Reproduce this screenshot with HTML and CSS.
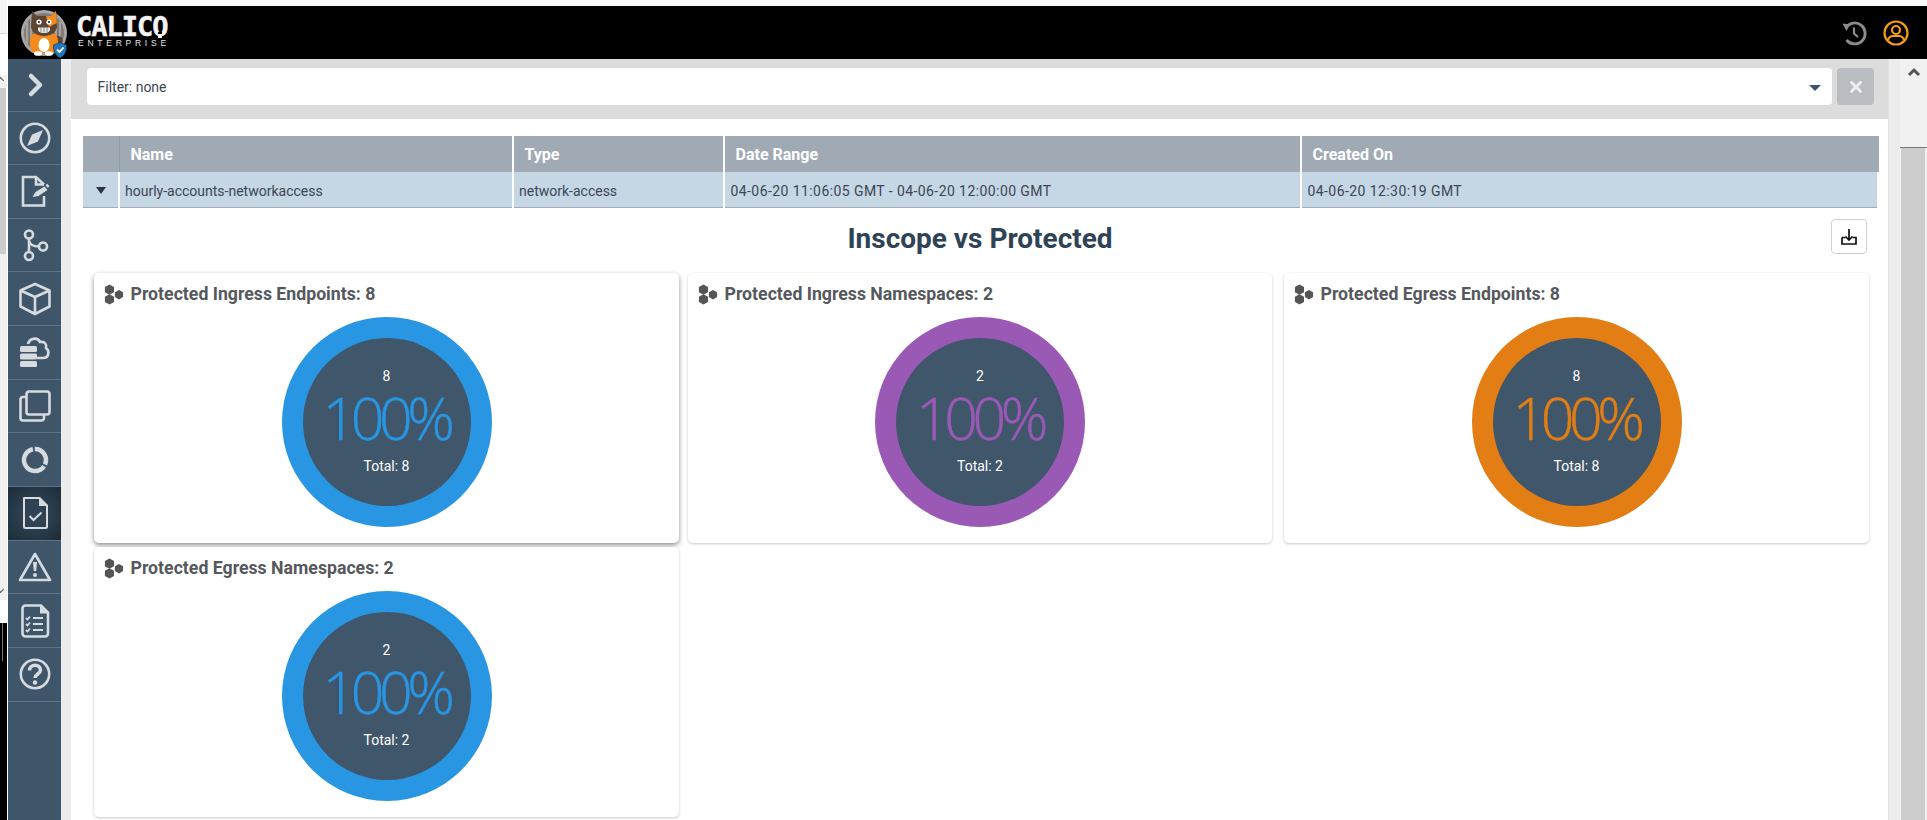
FILE: index.html
```html
<!DOCTYPE html>
<html lang="en">
<head>
<meta charset="utf-8">
<title>Calico Enterprise</title>
<link rel="stylesheet" href="styles.css">
</head>
<body>
<svg class="defs" width="0" height="0">
  <symbol id="hexes" viewBox="0 0 22 22">
    <path d="M6 0l5 2.8v5.6l-5 2.8-5-2.8V2.800z"/>
    <path d="M6 10.800l5 2.800v5.600l-5 2.800-5-2.800v-5.600z"/>
    <path d="M16.500 6l4.500 2.600v5.200l-4.500 2.600-4.500-2.600V8.600z"/>
  </symbol>
</svg>
<div class="backdrop">
  <div class="bd-tab"></div>
  <div class="bd-white"></div>
  <div class="bd-track"><span class="bd-up"></span></div>
  <div class="bd-thumb"></div>
  <div class="bd-rest"><span class="bd-down"></span></div>
  <div class="bd-white2"></div>
  <div class="bd-black"><span class="bd-line"></span></div>
</div>
<div class="app">
  <div class="top-strip"></div>
  <header class="topbar">
    <svg class="logo-cat" width="52" height="52" viewBox="0 0 52 52">
      <circle cx="24" cy="26" r="23" fill="#a8a5a2"/>
      <circle cx="24" cy="26" r="20" fill="#7d7a78"/>
      <path d="M7 15v22M11 11v30M36 10v32M40 15v22" stroke="#a5a29f" stroke-width="2" fill="none"/>
      <path d="M35 29c7-1 9 3 7 8-1 3-4 5-8 5l-1-3c3 0 5-2 5-4 0-2-1-3-3-3z" fill="#5e4433"/>
      <path d="M12 27c-3 6-3 15 2 19h20c5-4 5-13 2-19z" fill="#f28a1e"/>
      <ellipse cx="24" cy="38" rx="5.500" ry="7" fill="#fff"/>
      <path d="M12 4l5 5h14l5-5 1 15c0 6-6 10-13 10s-13-4-13-10z" fill="#5e4433"/>
      <path d="M26 9h5l5-5 .8 12-7.800 4z" fill="#f28a1e"/>
      <circle cx="19" cy="15" r="2.600" fill="#fff"/>
      <circle cx="29" cy="15" r="2.600" fill="#fff"/>
      <circle cx="19" cy="15" r="1.100" fill="#222"/>
      <circle cx="29" cy="15" r="1.100" fill="#222"/>
      <path d="M18 20.500h12v2c0 2-2.500 3.500-6 3.500s-6-1.500-6-3.500z" fill="#eee"/>
      <path d="M21 20.500v4.500M24 20.500v5M27 20.500v4.500" stroke="#777" stroke-width=".9"/>
      <ellipse cx="18" cy="46.500" rx="4" ry="2.300" fill="#fff"/>
      <ellipse cx="29" cy="46.500" rx="4" ry="2.300" fill="#fff"/>
      <path d="M40 35.500l6.500 2.500c.5 6-2 11-6.500 13-4.500-2-7-7-6.500-13z" fill="#1f78bd" stroke="#222" stroke-width=".6"/>
      <path d="M37 42.500l2.500 2.500 4-4.500" stroke="#fff" stroke-width="1.800" fill="none"/>
    </svg>
    <div class="brand">
      <span class="brand-name">CALICO</span>
      <span class="brand-sub">ENTERPRISE</span>
    </div>
    <div class="top-actions">
      <svg class="ic-history" width="26" height="26" viewBox="0 0 26 26" fill="none" stroke="#8c8c8c" stroke-width="2.800">
        <path d="M5 7.500A10.500 10.500 0 1 1 5.500 20"/>
        <path d="M1.500 3.500l7.500 1-3.500 6.500z" fill="#8c8c8c" stroke="none"/>
        <path d="M13 7.500v6l4 3.500" stroke-width="2.200"/>
      </svg>
      <svg class="ic-user" width="26" height="26" viewBox="0 0 26 26" fill="none" stroke="#f39c12" stroke-width="2.200">
        <circle cx="13" cy="13" r="11.500"/>
        <circle cx="13" cy="10" r="4"/>
        <path d="M5 20c1-3.500 3-4 5-4h6c2 0 4 .5 5 4"/>
      </svg>
    </div>
  </header>
  <div class="below">
    <nav class="sidebar">
      <div class="nav-item nav-first">
        <svg class="nav-ic" viewBox="0 0 34 34"><path d="M13 8l9 9-9 9" stroke-width="4.500" stroke-linecap="round" stroke-linejoin="round"/></svg>
      </div>
      <div class="nav-item">
        <svg class="nav-ic" viewBox="0 0 34 34"><circle cx="17" cy="17" r="14.200"/><path class="solid" d="M25 9L20 20.500 9 25l5-11.500z"/></svg>
      </div>
      <div class="nav-item">
        <svg class="nav-ic" viewBox="0 0 34 34"><path d="M26 22v9.500H5V3h13l8 7.500"/><path d="M18 3v7.500h8" /><path class="solid" d="M14.500 23l3-5 9-5.500 3 3.500-9 6z"/><path class="solid" d="M27.500 11l2-1.200 2 2.700-2 1.200z"/></svg>
      </div>
      <div class="nav-item">
        <svg class="nav-ic" viewBox="0 0 34 34"><circle cx="11" cy="6.500" r="4"/><circle cx="11" cy="28" r="4"/><circle cx="25" cy="18.500" r="4"/><path d="M11 10.500v13.500M11 13c1 4 5 5.500 10 5.500"/></svg>
      </div>
      <div class="nav-item">
        <svg class="nav-ic" viewBox="0 0 34 34"><path d="M17 2l14.500 6.500v16L17 32 2.500 24.500v-16zM2.500 8.500L17 15l14.500-6.500M17 15v17" stroke-linejoin="round"/></svg>
      </div>
      <div class="nav-item">
        <svg class="nav-ic" viewBox="0 0 34 34"><path d="M10 9c1-5 9-8 12-2 5-1 7 3 6 6 4 3 3 10-3 10h-6"/><rect class="solid" x="2" y="11" width="17" height="6" rx="1.500"/><rect class="solid" x="2" y="18.500" width="17" height="6" rx="1.500"/><rect class="solid" x="2" y="26" width="17" height="6" rx="1.500"/></svg>
      </div>
      <div class="nav-item">
        <svg class="nav-ic" viewBox="0 0 34 34"><rect x="8.500" y="2.500" width="23" height="23" rx="2.500"/><path d="M8.500 8H5a2.500 2.500 0 0 0-2.500 2.500V29A2.500 2.500 0 0 0 5 31.500h18.500a2.500 2.500 0 0 0 2.500-2.500v-3.500"/></svg>
      </div>
      <div class="nav-item">
        <svg class="nav-ic" viewBox="0 0 34 34"><path class="thick" d="M14.900 6.200A11 11 0 1 0 26.100 23.200"/><path class="thick" d="M16.800 6A11 11 0 0 1 27 21.500"/></svg>
      </div>
      <div class="nav-item nav-active">
        <svg class="nav-ic" viewBox="0 0 34 34"><path d="M6 2h15.500L29 9.500v21a1.500 1.500 0 0 1-1.500 1.500h-20A1.500 1.500 0 0 1 6 30.500z" stroke-width="2" stroke-linejoin="round"/><path class="solid" d="M21 2l8 8h-8z"/><path d="M11.500 20l4 4 8-7.500" stroke-width="2"/></svg>
      </div>
      <div class="nav-item">
        <svg class="nav-ic" viewBox="0 0 34 34"><path d="M17 4L32 30H2z" stroke-linejoin="round"/><path class="solid" d="M15 12h4l-.8 9h-2.400z"/><circle class="solid" cx="17" cy="25" r="2"/></svg>
      </div>
      <div class="nav-item">
        <svg class="nav-ic" viewBox="0 0 34 34"><path d="M7.500 1.500H23l7 7v21a3 3 0 0 1-3 3H7.500a3 3 0 0 1-3-3v-25a3 3 0 0 1 3-3z"/><path class="solid" d="M22 1.500l8 8h-8z"/><path d="M15 14h10M15 20h10M15 26h10M8 14l1.500 1.500L12 12.500M8 20l1.500 1.500L12 18.500M8 26l1.500 1.500L12 24.500" stroke-width="1.800"/></svg>
      </div>
      <div class="nav-item">
        <svg class="nav-ic" viewBox="0 0 34 34"><circle cx="17" cy="17" r="14.200"/><path d="M11.500 13.500c0-7 11-7 11-.5 0 4-5.500 4-5.500 8" stroke-width="3.500"/><circle class="solid" cx="17" cy="25.500" r="2.200"/></svg>
      </div>
    </nav>
    <div class="gutter"></div>
    <main class="main">
      <div class="filter-panel">
        <div class="filter-box">
          <span class="filter-text">Filter: none</span>
          <span class="filter-caret"></span>
        </div>
        <div class="filter-clear">
          <svg width="12" height="12" viewBox="0 0 12 12"><path d="M1.500 1.500l9 9M10.500 1.500l-9 9" stroke="#edeff1" stroke-width="2.800" stroke-linecap="round"/></svg>
        </div>
      </div>
      <div class="report-table">
        <div class="tr tr-head">
          <div class="th th-toggle"></div>
          <div class="th">Name</div>
          <div class="th">Type</div>
          <div class="th">Date Range</div>
          <div class="th th-last">Created On</div>
        </div>
        <div class="tr tr-row">
          <div class="td td-toggle"><span class="row-caret"></span></div>
          <div class="td">hourly-accounts-networkaccess</div>
          <div class="td">network-access</div>
          <div class="td td-date">04-06-20 11:06:05 GMT - 04-06-20 12:00:00 GMT</div>
          <div class="td td-date td-last">04-06-20 12:30:19 GMT</div>
        </div>
      </div>
      <div class="report-head">
        <h1 class="report-title">Inscope vs Protected</h1>
        <button class="download-btn" type="button" aria-label="Download">
          <svg width="20" height="20" viewBox="0 0 20 20" fill="none" stroke="#111" stroke-width="1.700"><path d="M3 10.500v6.500h14v-6.500h-3.500M6.500 10.500H3"/><path d="M10 2v11M6.500 9.500L10 13l3.500-3.500"/></svg>
        </button>
      </div>
      <div class="cards">
        <section class="card card-a card-hover">
          <h2 class="card-title"><svg class="hex-ic"><use href="#hexes"/></svg>Protected Ingress Endpoints: 8</h2>
          <div class="donut donut-blue"><div class="donut-inner"><span class="d-count">8</span><span class="d-pct">100%</span><span class="d-total">Total: 8</span></div></div>
        </section>
        <section class="card card-b">
          <h2 class="card-title"><svg class="hex-ic"><use href="#hexes"/></svg>Protected Ingress Namespaces: 2</h2>
          <div class="donut donut-purple"><div class="donut-inner"><span class="d-count">2</span><span class="d-pct">100%</span><span class="d-total">Total: 2</span></div></div>
        </section>
        <section class="card">
          <h2 class="card-title"><svg class="hex-ic"><use href="#hexes"/></svg>Protected Egress Endpoints: 8</h2>
          <div class="donut donut-orange"><div class="donut-inner"><span class="d-count">8</span><span class="d-pct">100%</span><span class="d-total">Total: 8</span></div></div>
        </section>
        <section class="card card-a">
          <h2 class="card-title"><svg class="hex-ic"><use href="#hexes"/></svg>Protected Egress Namespaces: 2</h2>
          <div class="donut donut-blue"><div class="donut-inner"><span class="d-count">2</span><span class="d-pct">100%</span><span class="d-total">Total: 2</span></div></div>
        </section>
      </div>
    </main>
    <div class="gutter gutter-right"></div>
    <div class="scrollbar">
      <div class="sb-top"><svg width="14" height="10" viewBox="0 0 14 10" fill="none"><path d="M2 8l5-5 5 5" stroke="#555" stroke-width="3"/></svg></div>
      <div class="sb-thumb"></div>
    </div>
  </div>
</div>
</body>
</html>
```
FILE: styles.css
```css
* { box-sizing: border-box; }
html, body { margin: 0; height: 820px; overflow: hidden; }
body { display: flex; background: #fff; font-family: Roboto, "Liberation Sans", sans-serif; color: #3f4a55; }
.defs { position: absolute; }

/* sliver of another window on the far left */
.backdrop { width: 8px; flex: none; height: 820px; display: flex; flex-direction: column; padding-right: 1px; }
.bd-tab { height: 34px; background: #f5f5f5; border-bottom: 1px solid #d8d8d8; }
.bd-white { height: 41px; background: #fff; }
.bd-track { height: 13px; background: #f1f1f1; position: relative; overflow: hidden; }
.bd-up { position: absolute; left: -2px; top: 3px; width: 5px; height: 5px; border-left: 1.500px solid #555; border-top: 1.500px solid #555; transform: rotate(45deg); }
.bd-thumb { height: 166px; background: #cdcdcd; margin-right: 1px; }
.bd-rest { height: 346px; background: #f0f0f0; position: relative; overflow: hidden; }
.bd-down { position: absolute; left: -2px; bottom: 8px; width: 5px; height: 5px; border-right: 1.500px solid #555; border-bottom: 1.500px solid #555; transform: rotate(45deg); }
.bd-white2 { height: 23px; background: #fff; }
.bd-black { flex: 1; background: #000; position: relative; }
.bd-line { position: absolute; left: 2px; top: 0; width: 1px; height: 38px; background: #777; }

.app { flex: 1; min-width: 0; display: flex; flex-direction: column; height: 820px; }
.top-strip { height: 6px; background: #f8f8f8; }
.topbar { height: 53px; flex: none; background: #000; display: flex; align-items: center; padding-left: 12px; }
.logo-cat { flex: none; }
.brand { display: flex; flex-direction: column; margin-left: 4px; margin-top: -1px; }
.brand-name { position: relative; width: 92px; font-family: "DejaVu Sans Mono", "Liberation Mono", monospace; font-weight: 700; font-size: 27px; line-height: 23px; letter-spacing: -1px; color: #f4f4f4; -webkit-text-stroke: .5px #f4f4f4; }
.brand-name::after { content: ""; position: absolute; right: 6px; bottom: 0; width: 4px; height: 4px; background: #f4f4f4; box-shadow: 0 -2px 0 0 #000; }
.brand-sub { font-family: "Liberation Sans", sans-serif; font-size: 8.500px; line-height: 11px; letter-spacing: 3.750px; color: #e6e6e6; margin-left: 2px; }
.top-actions { margin-left: auto; display: flex; gap: 16px; padding-right: 18px; align-items: center; }

.below { flex: 1; min-height: 0; display: flex; }
.sidebar { width: 53px; flex: none; background: #3f556a; display: flex; flex-direction: column; }
.nav-item { height: 53.670px; flex: none; display: flex; align-items: center; justify-content: center; border-bottom: 1px solid #5d7286; }
.nav-first { height: 52.500px; }
.nav-active { background: radial-gradient(ellipse at center, #2f4354 30%, #1c2b36 100%); border-bottom-color: #5d7286; }
.nav-ic { width: 34px; height: 34px; fill: none; stroke: #d6dbdf; stroke-width: 2.600; }
.nav-ic .solid { fill: #d6dbdf; stroke: none; }
.nav-ic .thick { stroke-width: 4.500; }

.gutter { width: 10px; flex: none; background: #ececec; }
.gutter-right { width: 12px; box-shadow: inset 1px 0 0 #e2e2e2; }

.main { width: 1817px; flex: none; background: #fff; overflow: hidden; }
.filter-panel { height: 60px; background: #dcdcdc; display: flex; gap: 5px; padding: 9px 14px 14px 16px; }
.filter-box { width: 1745px; background: #fff; border-radius: 4px; display: flex; align-items: center; justify-content: space-between; padding: 0 11px 0 10.500px; }
.filter-text { font-size: 14px; color: #3b4753; }
.filter-caret { width: 0; height: 0; border-left: 6px solid transparent; border-right: 6px solid transparent; border-top: 6px solid #3f556a; margin-top: 3px; }
.filter-clear { width: 37px; background: #b9bdc2; border-radius: 4px; display: flex; align-items: center; justify-content: center; }

.report-table { margin: 17px 9px 0 12px; }
.tr { display: grid; grid-template-columns: 37px 394px 211px 577px 577px; }
.tr-head { height: 36px; background: #a0aab4; }
.tr-row { height: 36px; background: #c5d6e5; border-bottom: 1px solid #9fabb6; }
.th { font-size: 16px; font-weight: 700; line-height: 36px; padding: 1px 0 0 10.500px; color: #fff; border-right: 2px solid #fff; }
.th-toggle { border-right: 1px solid #919ca7; }
.th-last, .td-last { border-right: 0; }
.td { font-size: 14px; line-height: 34px; padding: 2px 0 0 5px; color: #3b4753; border-right: 2px solid #fff; white-space: nowrap; }
.td-date { letter-spacing: .42px; padding-left: 5.500px; }
.td-toggle { padding: 0 0 0 13px; display: flex; align-items: center; }
.row-caret { width: 0; height: 0; border-left: 5px solid transparent; border-right: 5px solid transparent; border-top: 7px solid #2c3540; }

.report-head { position: relative; height: 35px; margin: 11px 21px 0 0; display: flex; align-items: center; justify-content: center; padding: 3px 0 0 22px; }
.report-title { margin: 0; font-size: 28px; line-height: 35px; font-weight: 700; color: #2f4356; }
.download-btn { position: absolute; right: 0; top: 0; width: 36px; height: 35px; padding: 0; background: #fff; border: 1px solid #d0d0d0; border-radius: 4px; display: flex; align-items: center; justify-content: center; }

.cards { display: grid; grid-template-columns: 594px 596px 585px; row-gap: 4px; margin: 19px 0 0 23px; }
.card { height: 270px; background: #fff; border-radius: 5px; box-shadow: 0 1px 3px rgba(0,0,0,.22); padding: 10px 10px 0; }
.card-a { margin-right: 9px; }
.card-b { margin-right: 12px; }
.card-hover { box-shadow: 0 2px 5px rgba(0,0,0,.45); }
.card-title { margin: 0; display: flex; align-items: center; gap: 6.500px; height: 22px; font-size: 17.700px; font-weight: 700; color: #55585c; white-space: nowrap; }
.hex-ic { width: 20px; height: 21px; fill: #555; flex: none; }
.donut { width: 210px; height: 210px; border-radius: 50%; margin: 12px auto 0; display: flex; align-items: center; justify-content: center; }
.donut-inner { width: 168px; height: 168px; border-radius: 50%; background: #40566b; display: flex; flex-direction: column; align-items: center; color: #fff; }
.donut-blue { background: #2896e2; }
.donut-purple { background: #9b59b6; }
.donut-orange { background: #e27e14; }
.d-count { font-size: 14px; line-height: 18px; margin-top: 29px; }
.d-pct { font-family: "Open Sans", sans-serif; font-weight: 300; font-size: 59px; line-height: 62px; letter-spacing: -5.400px; margin-top: 1px; padding-right: 1px; -webkit-text-stroke: .5px currentColor; }
.donut-blue .d-pct { color: #2896e2; }
.donut-purple .d-pct { color: #9b59b6; }
.donut-orange .d-pct { color: #e27e14; }
.d-total { font-size: 14px; line-height: 18px; margin-top: 9px; }

.scrollbar { flex: 1; display: flex; flex-direction: column; background: #f1f1f1; }
.sb-top { height: 89px; flex: none; background: #f1f1f1; display: flex; justify-content: center; padding-top: 8px; border-bottom: 1px solid #777; }
.sb-top svg { display: block; }
.sb-thumb { flex: 1; background: #cdcdcd; margin: 0 2px 0 1px; }
```
